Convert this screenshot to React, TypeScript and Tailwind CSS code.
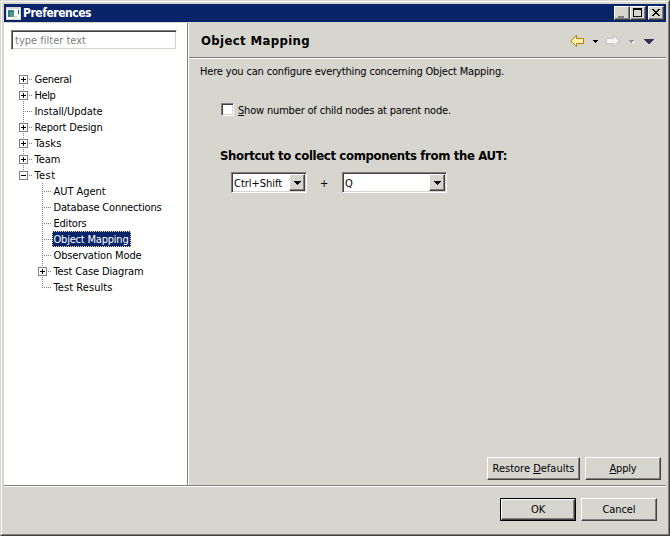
import { useLayoutEffect, useRef, useState, type ReactNode } from "react";

type TextProps = { w: number; className?: string; children: ReactNode };

// Single line of text whose tracking is adjusted so that it spans `w` pixels.
function Text({ w, className = "", children }: TextProps) {
  const ref = useRef<HTMLSpanElement>(null);
  const [tracking, setTracking] = useState(0);
  useLayoutEffect(() => {
    const el = ref.current;
    if (!el) return;
    const count = (el.textContent ?? "").length;
    setTracking((w - el.getBoundingClientRect().width) / count);
  }, [w]);
  return (
    <span ref={ref} className={`inline-block shrink-0 whitespace-pre ${className}`} style={{ letterSpacing: tracking }}>
      {children}
    </span>
  );
}

const raised =
  "bg-[#d6d5ce] border border-t-white border-l-white border-r-[#404040] border-b-[#404040] shadow-[inset_-1px_-1px_0_#808080]";
const sunken =
  "bg-white border border-t-[#808080] border-l-[#808080] border-r-white border-b-white shadow-[inset_1px_1px_0_#404040,inset_-1px_-1px_0_#d6d5ce]";

type Node = { label: string; w: number; box?: "+" | "-"; selected?: boolean };

const roots: Node[] = [
  { label: "General", w: 37, box: "+" },
  { label: "Help", w: 21, box: "+" },
  { label: "Install/Update", w: 68 },
  { label: "Report Design", w: 68, box: "+" },
  { label: "Tasks", w: 27, box: "+" },
  { label: "Team", w: 26, box: "+" },
  { label: "Test", w: 21, box: "-" },
];
const children: Node[] = [
  { label: "AUT Agent", w: 52 },
  { label: "Database Connections", w: 108 },
  { label: "Editors", w: 33 },
  { label: "Object Mapping", w: 75, selected: true },
  { label: "Observation Mode", w: 88 },
  { label: "Test Case Diagram", w: 90, box: "+" },
  { label: "Test Results", w: 59 },
];

function Branch({ box, first, last }: { box?: "+" | "-"; first: boolean; last: boolean }) {
  return (
    <svg width="14" height="16" className="shrink-0" shapeRendering="crispEdges">
      <path d={`M4.5 ${first ? 8 : 0}V${last ? 9 : 16}`} stroke="#808080" strokeDasharray="1 1" />
      <path d="M4 8.5H14" stroke="#808080" strokeDasharray="1 1" />
      {box && (
        <>
          <rect x="0.5" y="4.5" width="8" height="8" fill="#fff" stroke="#808080" />
          <path d={box === "+" ? "M2 8.5H7M4.5 6V11" : "M2 8.5H7"} stroke="#000" />
        </>
      )}
    </svg>
  );
}

function Row({ node, first = false, last = false }: { node: Node; first?: boolean; last?: boolean }) {
  return (
    <div className="flex h-4 items-center">
      <Branch box={node.box} first={first} last={last} />
      <div
        className={
          node.selected
            ? "flex h-4 w-[79px] items-center border border-dotted border-[#f5db95] bg-[#0a246a] pt-[2px] pl-[0.5px] text-white"
            : "flex h-4 items-center pt-[2px] pl-[1.5px]"
        }
      >
        <Text w={node.w} className="leading-[14px]">{node.label}</Text>
      </div>
    </div>
  );
}

function Combo({ value, w, className }: { value: string; w: number; className: string }) {
  return (
    <div className={`flex h-[21px] items-center justify-between p-px ${sunken} ${className}`}>
      <Text w={w} className="pt-px pl-px">{value}</Text>
      <div className={`flex h-[17px] w-4 items-center justify-center ${raised}`}>
        <svg width="7" height="4" shapeRendering="crispEdges">
          <path d="M0 0H7V1H6V2H5V3H4V4H3V3H2V2H1V1H0Z" />
        </svg>
      </div>
    </div>
  );
}

function Button({ children, className }: { children: ReactNode; className: string }) {
  return <button className={`flex h-[23px] items-center justify-center ${raised} ${className}`}>{children}</button>;
}

function CaptionButton({ children, className = "w-4" }: { children: ReactNode; className?: string }) {
  return (
    <div className={`h-[14px] ${raised} ${className}`}>
      <svg width="14" height="12" shapeRendering="crispEdges">{children}</svg>
    </div>
  );
}

export default function App() {
  return (
    <div className="h-[536px] w-[670px] overflow-hidden border border-t-[#d6d5ce] border-l-[#d6d5ce] border-r-[#404040] border-b-[#404040] bg-[#d6d5ce] font-['DejaVu_Sans_Condensed','DejaVu_Sans',sans-serif] text-[11px] leading-[13px] text-black">
      <div className="flex h-full flex-col border border-t-white border-l-white border-r-[#808080] border-b-[#808080] px-[2px] pt-[2px]">
        <header className="flex h-[18px] shrink-0 items-center bg-[#0a246a] pr-[2px] pl-[2px]">
          <svg width="15" height="13" shapeRendering="crispEdges">
            <rect width="15" height="13" fill="#d6d5ce" />
            <path d="M1 2H14V12H1Z" fill="#fff" />
            <path d="M2 3H8V10H2Z" fill="#347b92" />
            <path d="M4 5H8V10H4Z" fill="#4b9c79" />
            <path d="M12 3H13V7H12Z" fill="#1b568a" />
            <path d="M8 9H11V11H8Z" fill="#d6d5ce" />
          </svg>
          <Text w={68} className="ml-[2px] text-[12px] font-bold text-white">Preferences</Text>
          <div className="ml-auto flex">
            <CaptionButton>
              <path d="M3 9H9V11H3Z" fill="#808080" />
            </CaptionButton>
            <CaptionButton>
              <path d="M2 1H11V10H2ZM3 3V9H10V3Z" fillRule="evenodd" />
            </CaptionButton>
            <CaptionButton className="ml-[2px] w-4">
              <path d="M3 2H5V3H6V4H8V3H9V2H11V3H10V4H9V5H8V6H9V7H10V8H11V9H9V8H8V7H6V8H5V9H3V8H4V7H5V6H6V5H5V4H4V3H3Z" />
            </CaptionButton>
          </div>
        </header>

        <div className="mt-px flex h-[462px] shrink-0">
          <aside className="flex w-[183px] shrink-0 flex-col bg-white">
            <div className={`mt-[7px] ml-[7px] flex h-5 w-[166px] items-center pl-[3px] text-[#808080] ${sunken}`}>
              <Text w={71}>type filter text</Text>
            </div>
            <div className="mt-[21px] ml-[15px]">
              {roots.map((n, i) => (
                <Row key={n.label} node={n} first={i === 0} last={i === roots.length - 1} />
              ))}
              <div className="ml-[19px]">
                {children.map((n, i) => (
                  <Row key={n.label} node={n} last={i === children.length - 1} />
                ))}
              </div>
            </div>
          </aside>
          <div className="w-[2px] shrink-0 border-r border-l border-r-white border-l-[#808080]" />
          <main className="flex grow flex-col">
            <div className="-mt-px flex h-9 shrink-0 items-center border-b border-[#808080] pr-3 pl-3">
              <Text w={109} className="pt-px text-[13px] font-bold">Object Mapping</Text>
              <svg width="86" height="15" className="ml-auto">
                <path d="M2.7 9L8.5 3.4V6.5H15.5V11.5H8.5V14.6Z" fill="#fff3a8" stroke="#b97a0c" />
                <path d="M25 8H30V9H29V10H28V11H27V10H26V9H25Z" shapeRendering="crispEdges" />
                <path d="M51.3 9L45.5 3.4V6.5H38.5V11.5H45.5V14.6Z" fill="#f6f6f6" stroke="#c0c0bc" />
                <path d="M62 9H67V10H66V11H65V12H64V11H63Z" fill="#fff" shapeRendering="crispEdges" />
                <path d="M61 8H66V9H65V10H64V11H63V10H62V9H61Z" fill="#909090" shapeRendering="crispEdges" />
                <path d="M76 7H86V8H85V9H84V10H83V11H82V12H80V11H79V10H78V9H77V8H76Z" fill="#34305c" shapeRendering="crispEdges" />
              </svg>
            </div>
            <div className="h-px shrink-0 bg-white" />
            <div className="flex grow flex-col pl-[11px]">
              <Text w={304} className="mt-[6px] self-start">Here you can configure everything concerning Object Mapping.</Text>
              <label className="mt-[25px] ml-[21px] flex h-[13px] items-center gap-1">
                <span className={`size-[13px] ${sunken}`} />
                <Text w={213} className="pt-[2px]"><u>S</u>how number of child nodes at parent node.</Text>
              </label>
              <Text w={287} className="mt-[32px] ml-[20px] self-start text-[13px] leading-[16px] font-bold">Shortcut to collect components from the AUT:</Text>
              <div className="mt-2 ml-[31px] flex items-center">
                <Combo value="Ctrl+Shift" w={49} className="w-[76px]" />
                <Text w={8} className="ml-[13px] pt-[2px]">+</Text>
                <Combo value="Q" w={9} className="ml-[14px] w-[105px]" />
              </div>
              <div className="mt-auto mb-[5px] flex justify-end gap-[5px] pr-[5px]">
                <Button className="w-[93px]"><Text w={82}>Restore <u>D</u>efaults</Text></Button>
                <Button className="w-[76px]"><Text w={27}><u>A</u>pply</Text></Button>
              </div>
            </div>
          </main>
        </div>

        <footer className="flex justify-end gap-[5px] border-t border-[#808080] pt-3 pr-[9px] shadow-[inset_0_1px_0_white]">
          <div className="h-[23px] w-[76px] border border-black">
            <button className={`flex h-full w-full items-center justify-center ${raised}`}><Text w={14}>OK</Text></button>
          </div>
          <Button className="w-[76px]"><Text w={33}>Cancel</Text></Button>
        </footer>
      </div>
    </div>
  );
}
